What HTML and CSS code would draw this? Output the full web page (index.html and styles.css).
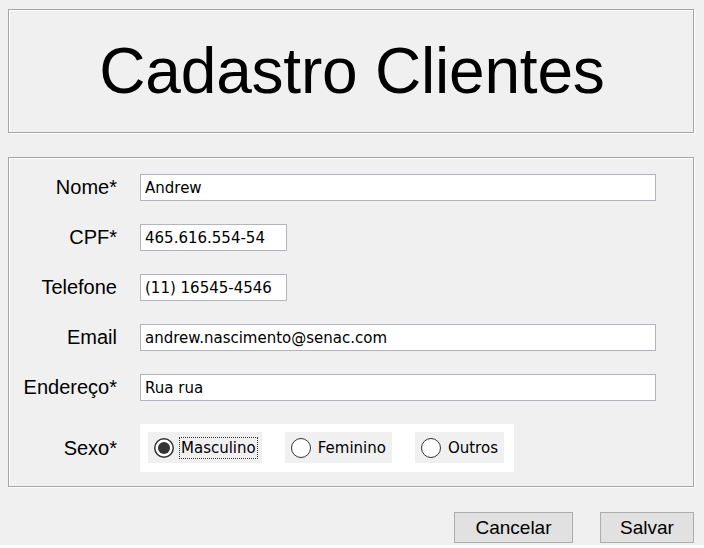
FILE: index.html
```html
<!DOCTYPE html>
<html lang="pt">
<head>
<meta charset="utf-8">
<title>Cadastro Clientes</title>
<link rel="stylesheet" href="styles.css">
</head>
<body>
<div class="app">
  <div class="etched title-panel">
    <h1 class="title">Cadastro Clientes</h1>
  </div>
  <div class="etched form-panel">
    <label class="lbl" for="nome">Nome*</label>
    <input class="field field-wide" id="nome" type="text" value="Andrew">

    <label class="lbl" for="cpf">CPF*</label>
    <input class="field field-short" id="cpf" type="text" value="465.616.554-54">

    <label class="lbl" for="tel">Telefone</label>
    <input class="field field-short" id="tel" type="text" value="(11) 16545-4546">

    <label class="lbl" for="email">Email</label>
    <input class="field field-wide" id="email" type="text" value="andrew.nascimento@senac.com">

    <label class="lbl" for="end">Endereço*</label>
    <input class="field field-wide" id="end" type="text" value="Rua rua">

    <span class="lbl">Sexo*</span>
    <div class="radio-group">
      <div class="radio">
        <svg class="radio-icon" width="20" height="20" viewBox="0 0 20 20"><circle cx="10" cy="10" r="9.25" fill="#fff" stroke="#333" stroke-width="1.5"/><circle cx="10" cy="10" r="6" fill="#333"/></svg>
        <span class="radio-text focused">Masculino</span>
      </div>
      <div class="radio">
        <svg class="radio-icon" width="20" height="20" viewBox="0 0 20 20"><circle cx="10" cy="10" r="9.5" fill="#fff" stroke="#333" stroke-width="1"/></svg>
        <span class="radio-text">Feminino</span>
      </div>
      <div class="radio">
        <svg class="radio-icon" width="20" height="20" viewBox="0 0 20 20"><circle cx="10" cy="10" r="9.5" fill="#fff" stroke="#333" stroke-width="1"/></svg>
        <span class="radio-text">Outros</span>
      </div>
    </div>
  </div>
  <div class="actions">
    <button class="btn btn-cancel" type="button">Cancelar</button>
    <button class="btn btn-save" type="button">Salvar</button>
  </div>
  <div class="bottom-strip"></div>
</div>
</body>
</html>
```
FILE: styles.css
```css
html, body {
  margin: 0;
  padding: 0;
}
body {
  background: #f0f0f0;
  width: 704px;
  height: 548px;
  overflow: hidden;
  font-family: "Liberation Sans", Arial, sans-serif;
  color: #000;
}
.app {
  padding: 9px 0 0 8px;
  display: flex;
  flex-direction: column;
}
.etched {
  box-sizing: border-box;
  border: 1px solid #a5a5a5;
  box-shadow: 1px 1px 0 #ffffff, inset 1px 1px 0 #ffffff;
}
.title-panel {
  width: 686px;
  height: 124px;
  display: flex;
  align-items: center;
  justify-content: center;
}
.title {
  margin: 0 0 0 2px;
  font-weight: normal;
  font-size: 64px;
  line-height: 1;
  font-family: "Liberation Sans", Arial, sans-serif;
  letter-spacing: -0.2px;
}
.form-panel {
  margin-top: 24px;
  width: 686px;
  height: 330px;
  padding: 16px 36px 0 0;
  display: grid;
  grid-template-columns: 108px 1fr;
  column-gap: 23px;
  row-gap: 23px;
  align-content: start;
  align-items: center;
}
.lbl {
  font-size: 20px;
  text-align: right;
  white-space: nowrap;
}
.field {
  box-sizing: border-box;
  height: 27px;
  margin: 0;
  padding: 0 0 0 4px;
  border: 1px solid #b4b4bc;
  background: #fff;
  font-family: "DejaVu Sans", Verdana, sans-serif;
  font-size: 15px;
  color: #000;
  outline: none;
}
.field-wide {
  width: 516px;
}
.field-short {
  width: 147px;
}
.radio-group {
  width: 374px;
  box-sizing: border-box;
  background: #fff;
  padding: 8px 7px 9px 8px;
  display: flex;
  gap: 23px;
}
.radio {
  height: 31px;
  background: #f0f0f0;
  display: flex;
  align-items: center;
  gap: 7px;
  padding: 0 6px;
}
.radio-icon {
  display: block;
  flex: none;
}
.radio-text {
  font-family: "DejaVu Sans", Verdana, sans-serif;
  font-size: 15px;
  line-height: 18px;
  color: #000;
}
.focused {
  outline: 1px dotted #333;
  outline-offset: 1px;
}
.actions {
  margin-top: 25px;
  width: 686px;
  display: flex;
  justify-content: flex-end;
  gap: 27px;
}
.btn {
  box-sizing: border-box;
  height: 31px;
  margin: 0;
  padding: 0;
  background: #e1e1e1;
  border: 1px solid #adadad;
  font-family: "Liberation Sans", Arial, sans-serif;
  font-size: 19px;
  color: #000;
}
.btn-cancel {
  width: 119px;
}
.btn-save {
  width: 94px;
}
.bottom-strip {
  margin: 2px 0 0 -8px;
  width: 704px;
  height: 3px;
  background: #fff;
}
```
